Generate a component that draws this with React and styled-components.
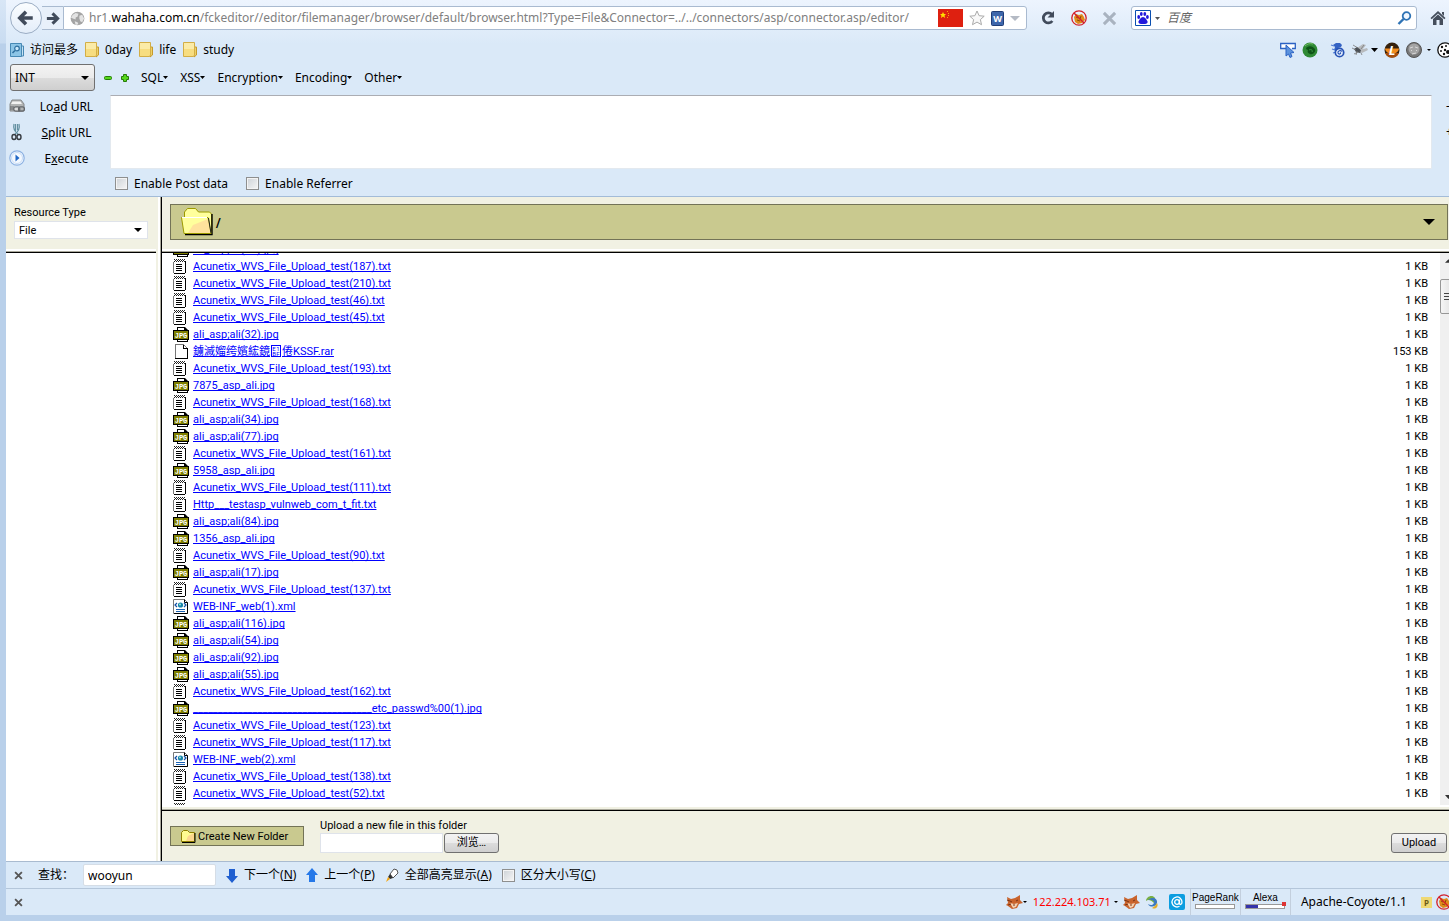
import { useEffect, useRef } from 'react';
import styled, { createGlobalStyle } from 'styled-components';

const GlobalStyle = createGlobalStyle`
  * {
    box-sizing: border-box;
  }
  body {
    margin: 0;
    background: #b9d0ea;
    color: #000;
    font: 12px/18px "Noto Sans", "Noto Sans CJK SC", sans-serif;
  }
  button, input, select, textarea {
    font: inherit;
    color: inherit;
  }
`;

const Window = styled.div`
  display: flex;
  flex-direction: column;
  height: 100vh;
  padding: 0 0 6px 6px;
  overflow: hidden;
  background: linear-gradient(#d8e6f6, #c9dcf1 43px, #b9d0ea 44px);
`;

const Chrome = styled.header`
  flex: none;
  background: linear-gradient(#edf4fe, #dae9f8 44px);
  border-bottom: 1px solid #a3bcd8;
`;

const PlainButton = styled.button`
  display: inline-flex;
  align-items: center;
  flex: none;
  gap: ${({ $gap }) => $gap || 0}px;
  padding: 0;
  border: 0;
  background: none;
  white-space: nowrap;
`;

const NavBar = styled.nav`
  display: flex;
  align-items: center;
  height: 36px;
  padding: 0 3px 0 4px;
`;

const BackButton = styled(PlainButton)`
  justify-content: center;
  width: 32px;
  height: 32px;
  border: 1px solid #9badc4;
  border-radius: 50%;
  background: linear-gradient(#fbfdff, #e3edf9);
`;

const ForwardButton = styled(PlainButton)`
  justify-content: center;
  width: 21px;
  height: 24px;
  border: solid #a9bad0;
  border-width: 1px 0;
  background: #e8f0fa;
`;

const UrlBox = styled.div`
  display: flex;
  align-items: center;
  flex: 1;
  min-width: 0;
  height: 24px;
  padding: 0 6px;
  border: 1px solid #a9bad0;
  border-radius: 0 3px 3px 0;
  background: #fff;
`;

const UrlText = styled.div`
  flex: 1;
  min-width: 0;
  margin: 0 5px 0 4px;
  overflow: hidden;
  white-space: nowrap;
  color: #808080;

  b {
    color: #000;
    font-weight: 400;
  }
`;

const UrlIcons = styled.div`
  display: flex;
  align-items: center;
  gap: 6px;
`;

const NavActions = styled.div`
  display: flex;
  gap: 15px;
  margin: 0 14px 0 13px;
`;

const SearchBox = styled.div`
  display: flex;
  align-items: center;
  flex: none;
  gap: 4px;
  width: 286px;
  height: 24px;
  margin-right: 13px;
  padding: 0 4px 0 3px;
  border: 1px solid #a9bad0;
  border-radius: 3px;
  background: #fff;
`;

const SearchInput = styled.input`
  flex: 1;
  min-width: 0;
  padding: 0 0 0 3px;
  border: 0;
  background: none;
  outline: none;

  &::placeholder {
    color: #666;
    font-style: italic;
    opacity: 1;
  }
`;

const BookmarkBar = styled.div`
  display: flex;
  align-items: center;
  justify-content: space-between;
  height: 27px;
  padding-left: 4px;
  overflow: hidden;
`;

const Group = styled.div`
  display: flex;
  align-items: center;
  gap: ${({ $gap }) => $gap}px;
`;

const AddonIcons = styled(Group)`
  flex: none;
  margin-right: -4px;
`;

const MenuBar = styled.div`
  display: flex;
  align-items: center;
  gap: 9px;
  height: 29px;
  padding-left: 4px;
`;

const Menus = styled.div`
  display: flex;
  gap: 12px;
  margin-left: 3px;
`;

const SelectWrap = styled.div`
  display: grid;
  align-items: center;
  width: ${({ $width }) => $width}px;

  select, svg {
    grid-area: 1 / 1;
  }
  svg {
    justify-self: end;
    margin-right: 6px;
    pointer-events: none;
  }
`;

const ModeSelect = styled.select`
  appearance: none;
  height: 27px;
  padding: 0 4px;
  border: 1px solid #707070;
  border-radius: 3px;
  background: linear-gradient(#f3f3f3, #ebebeb 50%, #dcdcdc 51%, #cfcfcf);
`;

const HackBar = styled.div`
  display: flex;
  height: 74px;
  margin-top: 3px;
  padding-left: 3px;
  overflow: hidden;
`;

const HackActions = styled.div`
  display: flex;
  flex-direction: column;
  flex: none;
  gap: 4px;
  width: 101px;
`;

const HackButton = styled(PlainButton)`
  height: 22px;

  span {
    width: 83px;
    padding-top: 1px;
    text-align: center;
  }
`;

const HackText = styled.textarea`
  flex: 1;
  resize: none;
  border: 1px solid #e3e9ef;
  border-top-color: #abadb3;
  background: #fff;
`;

const Resizers = styled.div`
  display: flex;
  flex-direction: column;
  flex: none;
  gap: 8px;
  width: 17px;
  padding: 2px 0 0 14px;
`;

const OptionRow = styled.div`
  display: flex;
  align-items: center;
  gap: 18px;
  height: 27px;
  padding: 2px 0 0 109px;
`;

const CheckLabel = styled.label`
  display: flex;
  align-items: center;
  gap: 6px;
  white-space: nowrap;

  input {
    appearance: none;
    width: 13px;
    height: 13px;
    margin: 0;
    border: 1px solid #8e8f8f;
    background: linear-gradient(135deg, #cdd2d7, #f6f6f6);
    box-shadow: inset 0 0 0 1px #f4f4f4;
  }
`;

const Frames = styled.main`
  display: flex;
  flex: 1;
  min-height: 0;
  background: #f1f1e3;
  font: 11px/17px Roboto, "Noto Sans CJK SC", sans-serif;
`;

const Sidebar = styled.aside`
  display: flex;
  flex-direction: column;
  flex: none;
  width: 150px;
`;

const FrameHead = styled.div`
  flex: none;
  height: 56px;
  padding: 7px 0 0 8px;
  border-bottom: 1px solid #000;
  box-shadow: inset 0 -1px #aaa99c, inset 0 -3px #fff;
`;

const Blank = styled.div`
  flex: 1;
  background: #fff;
`;

const TypeLabel = styled.label`
  display: block;
`;

const TypeSelect = styled.select`
  appearance: none;
  height: 18px;
  padding: 0 4px;
  border: 1px solid #dfe3ea;
  border-radius: 0;
  background: #fff;
`;

const Content = styled.section`
  display: flex;
  flex-direction: column;
  flex: 1;
  min-width: 0;
  margin-left: 5px;
  border-left: 1px solid #000;
  box-shadow: -1px 0 #aaa99c, -3px 0 #fff;
`;

const FolderBar = styled.button`
  display: flex;
  align-items: center;
  width: calc(100% - 1px);
  height: 36px;
  padding: 0 12px 0 9px;
  border: 1px solid #737357;
  background: #c9c98f;
  font-size: 13px;
  font-weight: 700;

  span {
    flex: 1;
    padding-left: 2px;
    text-align: left;
  }
`;

const ListArea = styled.div`
  display: flex;
  flex: 1;
  min-height: 0;
  overflow: hidden;
  background: #fff;
`;

const Scroller = styled.div`
  flex: 1;
  margin-bottom: 5px;
  overflow: hidden;
`;

const FileTable = styled.table`
  width: 100%;
  border-collapse: collapse;

  td {
    height: 17px;
    padding: 0;
    line-height: 17px;
    white-space: nowrap;
  }
  td:first-child {
    width: 31px;
    padding-left: 11px;
  }
  td:last-child {
    padding-right: 12px;
    text-align: right;
  }
  svg {
    display: block;
  }
`;

const FileLink = styled.a`
  color: #00f;
  text-decoration: underline;
  text-underline-offset: 1px;
  text-decoration-skip-ink: none;
`;

const HexGlyph = styled.span`
  display: inline-grid;
  grid-template-columns: 4px 4px;
  justify-content: center;
  width: 10px;
  height: 12px;
  margin: 2px 1px 0;
  vertical-align: top;
  border: 1px solid #00f;
  font-size: 6px;
  line-height: 5px;
  text-align: center;
`;

const ScrollBar = styled.div`
  display: flex;
  flex-direction: column;
  align-items: center;
  flex: none;
  width: 17px;
  margin: 0 -8px 5px 0;
  background: #f0f0f0;

  svg {
    margin: 6px 0;
  }
`;

const Thumb = styled.div`
  display: flex;
  flex-direction: column;
  align-items: center;
  justify-content: center;
  gap: 2px;
  width: 17px;
  height: 35px;
  margin: 10px 0 auto;
  border: 1px solid #979797;
  border-radius: 2px;
  background: linear-gradient(90deg, #f5f5f5, #dcdcdc);

  i {
    width: 9px;
    height: 1px;
    background: #444;
  }
`;

const UploadFrame = styled.footer`
  display: flex;
  align-items: flex-start;
  flex: none;
  height: 51px;
  padding: 8px 2px 0 8px;
  border-top: 1px solid #000;
  box-shadow: 0 -1px #aaa99c, 0 -3px #f1f1e3;
`;

const CreateButton = styled.button`
  display: flex;
  align-items: center;
  gap: 2px;
  width: 134px;
  height: 20px;
  margin: 7px 16px 0 0;
  padding: 0 9px;
  border: 1px solid #737357;
  background: #c9c98f;
  white-space: nowrap;
`;

const UploadForm = styled.form`
  flex: 1;

  label {
    display: block;
    height: 14px;
    line-height: 14px;
  }
`;

const FileBox = styled.input`
  width: 123px;
  height: 20px;
  padding: 0 4px;
  border: 1px solid #dfe3ea;
  background: #fff;
`;

const GreyButton = styled.button`
  width: 55px;
  height: 20px;
  padding: 0;
  border: 1px solid #707070;
  border-radius: 3px;
  background: linear-gradient(#f3f3f3, #ebebeb 50%, #dcdcdc 51%, #cfcfcf);
  line-height: 18px;
`;

const UploadButton = styled(GreyButton)`
  width: 56px;
  margin-top: 14px;
`;

const FindBar = styled.div`
  display: flex;
  align-items: center;
  flex: none;
  gap: 10px;
  height: 27px;
  padding-left: 8px;
  border-top: 1px solid #a9bbd0;
  background: #dae9f8;
`;

const FindLabel = styled.label`
  display: flex;
  align-items: center;
  gap: 9px;
  margin-left: 5px;
  white-space: nowrap;
`;

const FindInput = styled.input`
  width: 133px;
  height: 22px;
  padding: 0 4px;
  border: 1px solid #d5dde6;
  border-radius: 2px;
  background: #fff;
`;

const StatusBar = styled.div`
  display: flex;
  align-items: center;
  justify-content: space-between;
  flex: none;
  height: 27px;
  padding-left: 8px;
  overflow: hidden;
  border-top: 1px solid #b4c6da;
  background: #dae9f8;
`;

const StatusItems = styled.div`
  display: flex;
  align-items: center;
  height: 26px;
  margin-right: -3px;
`;

const Address = styled.span`
  margin: 0 3px 0 6px;
  color: #f00;
  font-size: 11px;
`;

const Meter = styled.div`
  display: flex;
  flex-direction: column;
  align-items: center;
  gap: 1px;
  width: 50px;
  height: 26px;
  padding-top: 3px;
  border-left: 1px solid #c3cfdd;
  font: 10px/11px "Liberation Sans", sans-serif;
`;

const Track = styled.div`
  position: relative;
  width: 40px;
  height: 5px;
  border: 1px solid #999;
  background: linear-gradient(90deg, #33a ${({ $value }) => $value}%, #fff ${({ $value }) => $value}%);

  i {
    position: absolute;
    top: -3px;
    right: -2px;
    width: 4px;
    height: 4px;
    background: #d33;
  }
`;

const Server = styled.span`
  padding: 4px 14px 4px 10px;
  border-left: 1px solid #c3cfdd;
`;

function Caret({ size = 5, color = '#000' }) {
  return (
    <svg width={size} height={Math.ceil(size / 2)} viewBox="0 0 8 4" preserveAspectRatio="none">
      <path d="M0 0h8L4 4z" fill={color} />
    </svg>
  );
}

function ArrowIcon({ size, flip }) {
  return (
    <svg width={size} height={size} viewBox="0 0 16 16">
      <path
        d={flip ? 'M2 8h11M8 2.5L13.5 8 8 13.5' : 'M14 8H3M8 2.5L2.500 8 8 13.5'}
        fill="none"
        stroke="#414b5b"
        strokeWidth="3.2"
      />
    </svg>
  );
}

function GlobeIcon() {
  return (
    <svg width="15" height="15" viewBox="0 0 16 16">
      <circle cx="8" cy="8" r="7.300" fill="#a4a4a4" />
      <path d="M3 4l3-2 3 1-1 3-2 1v2L3 8 1 7zM10 5l3-1 2 4-2 4-2-1-1-3zM5 11l3 1 1 2-3 1z" fill="#e3e3e3" />
    </svg>
  );
}

function FlagIcon() {
  return (
    <svg width="25" height="18" viewBox="0 0 25 18">
      <path d="M0 0h25v18H0z" fill="#de2010" />
      <path d="M5 3l1 2h2L6.500 6.500 7 9 5 7.500 3 9l.5-2.500L2 5h2z" fill="#ffde00" />
      <path d="M9 2h1v1H9zM10 4h1v1h-1zM10 6h1v1h-1zM9 8h1v1H9z" fill="#f3a50c" />
    </svg>
  );
}

function StarIcon() {
  return (
    <svg width="16" height="16" viewBox="0 0 16 16">
      <path
        d="M8 1l2.100 4.700 5.100.5-3.800 3.400 1.100 5.100L8 12.100l-4.500 2.600 1.100-5.100L.8 6.200l5.100-.5z"
        fill="#f8f8f8"
        stroke="#aaa"
      />
    </svg>
  );
}

function WordIcon() {
  return (
    <svg width="13" height="15" viewBox="0 0 13 15">
      <rect x=".5" y=".5" width="12" height="14" rx="1" fill="#3d66ab" stroke="#1f3d77" />
      <text x="6.500" y="11" textAnchor="middle" fill="#fff" fontSize="9" fontWeight="700">W</text>
    </svg>
  );
}

function ReloadIcon() {
  return (
    <svg width="16" height="16" viewBox="0 0 16 16">
      <path d="M12.300 11A5 5 0 1 1 12 4.500" fill="none" stroke="#414b5b" strokeWidth="2.800" />
      <path d="M14 1v6.500H7.500z" fill="#414b5b" />
    </svg>
  );
}

function BlockIcon() {
  return (
    <svg width="16" height="16" viewBox="0 0 16 16">
      <path d="M3 7l2-3 3 1 3-1 2 3 1 3-3 3-4 1-3-2z" fill="#e08a1c" />
      <path d="M5 7l2 1M10 6l-1 3M6 10l3 1" stroke="#8a4b08" />
      <circle cx="8" cy="8" r="7.200" fill="none" stroke="#d3202a" strokeWidth="1.300" />
      <path d="M3 3l10 10" stroke="#d3202a" strokeWidth="1.400" />
    </svg>
  );
}

function CloseIcon({ size, color }) {
  return (
    <svg width={size} height={size} viewBox="0 0 12 12">
      <path d="M1.500 1.500l9 9M10.500 1.500l-9 9" stroke={color} strokeWidth="2.400" />
    </svg>
  );
}

function BaiduIcon() {
  return (
    <svg width="16" height="16" viewBox="0 0 16 16">
      <path d="M.5.5h15v15H.5z" fill="#fff" stroke="#0a4fb0" />
      <g fill="#2319dc">
        <ellipse cx="3.700" cy="7" rx="1.400" ry="1.900" />
        <ellipse cx="6.300" cy="4" rx="1.400" ry="2" />
        <ellipse cx="9.800" cy="4" rx="1.400" ry="2" />
        <ellipse cx="12.400" cy="7" rx="1.400" ry="1.900" />
        <path d="M8 7c2 0 4 3 4.500 4.500S11.500 14 10 14H6c-1.500 0-3-1-2.500-2.500S6 7 8 7z" />
      </g>
    </svg>
  );
}

function SearchIcon() {
  return (
    <svg width="15" height="15" viewBox="0 0 15 15">
      <circle cx="9.500" cy="5" r="3.800" fill="#f0f7ff" stroke="#2e73b5" strokeWidth="1.800" />
      <path d="M6.500 8L1.500 13" stroke="#2e73b5" strokeWidth="2.400" />
    </svg>
  );
}

function HomeIcon() {
  return (
    <svg width="16" height="16" viewBox="0 0 16 16">
      <path d="M8 1l7.500 7-1.200 1.200L8 3.500 1.700 9.200.5 8zM12 2h2v4l-2-2z" fill="#454e5c" />
      <path d="M3 9l5-4.500L13 9v6H9.500v-5h-3v5H3z" fill="#454e5c" />
    </svg>
  );
}

function MostVisitedIcon() {
  return (
    <svg width="14" height="16" viewBox="0 0 14 16">
      <path d="M10 4h3.500v10H10z" fill="#c5e2f4" stroke="#4789b5" />
      <path d="M.5 1.500h11v13H.5z" fill="#8dc5e6" stroke="#4789b5" />
      <circle cx="7" cy="6.500" r="2.300" fill="#c9e8fa" stroke="#2f6f9f" strokeWidth="1.200" />
      <path d="M5 8.500L2.500 11" stroke="#2f6f9f" strokeWidth="1.600" />
    </svg>
  );
}

function BookmarkFolder() {
  return (
    <svg width="14" height="16" viewBox="0 0 14 16">
      <path d="M10 5h3.500v8L11 15z" fill="#edd067" stroke="#c69b2d" />
      <path d="M.5.5h11v13l-1.500 1H.5z" fill="#f7dd80" stroke="#d3ae46" />
      <path d="M1 1h10v6H1z" fill="#fbeba7" />
    </svg>
  );
}

function PointerIcon() {
  return (
    <svg width="16" height="16" viewBox="0 0 16 16">
      <path d="M6 6.500H.7v-5h14.600v5H12" fill="#fff" stroke="#2b62c4" strokeWidth="1.300" />
      <path d="M6 3v11l2.500-2 1.500 3.500 2-1L10.500 11l3.500-.5z" fill="#5c92dd" stroke="#2b62c4" />
    </svg>
  );
}

function GreenBallIcon() {
  return (
    <svg width="16" height="16" viewBox="0 0 16 16">
      <circle cx="8" cy="8" r="7.500" fill="#2f8a35" />
      <path d="M4 6c3-3 7-2 9 1 1 3-2 6-5 5-2-1-3-2-2-4-1 0-2-1-2-2z" fill="#0e5417" />
      <path d="M7 8c2-1 4 0 3 2" fill="none" stroke="#3f9a45" />
      <path d="M3 4c2-2 5-3 8-2" stroke="#77bd66" fill="none" />
    </svg>
  );
}

function SeahorseIcon() {
  return (
    <svg width="16" height="16" viewBox="0 0 16 16">
      <path d="M3 3l3-2h4l2 2-1 2-3 1-2 3-2-1 1-3z" fill="#3463c4" />
      <path d="M1 3l3 1M2 7l3 1M3 11l3-1" stroke="#4f7cd6" strokeWidth="1.300" />
      <circle cx="9.500" cy="10.500" r="4.200" fill="#e4eefc" stroke="#2552b5" strokeWidth="1.700" />
      <path d="M12 9.500c-1.500-2-4.500-.5-4 1.500.8 1.800 3 1 2.500-.7" fill="none" stroke="#2552b5" strokeWidth="1.200" />
    </svg>
  );
}

function FlyIcon() {
  return (
    <svg width="16" height="16" viewBox="0 0 16 16">
      <path d="M5 6l6-4 3 1-4 5zM8 8l7-2 1 2-6 3z" fill="#b7babd" />
      <path d="M2 7l3-2 4 3-1 3-4-1z" fill="#4a4f55" />
      <path d="M0 6l4 2M1 3l5 3M5 9l-1 4M8 9l2 4M6 10L2 12M9 7l3-4" stroke="#777" fill="none" strokeWidth=".8" />
    </svg>
  );
}

function LiveIcon() {
  return (
    <svg width="16" height="16" viewBox="0 0 16 16">
      <circle cx="8" cy="8" r="7.500" fill="#35210d" />
      <path d="M.8 6.500a7.500 7.500 0 0 0 14.400 0z" fill="#f08a1d" />
      <path d="M1 11h14a7.500 7.500 0 0 1-14 0z" fill="#a44d0c" />
      <text x="8" y="13" textAnchor="middle" fill="#fff" fontSize="13" fontWeight="700" fontStyle="italic">L</text>
    </svg>
  );
}

function GreyFaceIcon() {
  return (
    <svg width="16" height="16" viewBox="0 0 16 16">
      <circle cx="8" cy="8" r="7.500" fill="#777" stroke="#555" />
      <circle cx="8" cy="7" r="5.500" fill="#a4a4a4" />
      <path d="M4 6l3-1M9 5l3 1M5 8l1 1M10 8l1 1M6 12l4-1" stroke="#d8d8d8" />
    </svg>
  );
}

function CookieIcon() {
  return (
    <svg width="16" height="16" viewBox="0 0 16 16">
      <circle cx="8" cy="8" r="7.200" fill="#fff" stroke="#111" strokeWidth="1.300" />
      <g fill="#111">
        <circle cx="5" cy="5" r="1.200" />
        <circle cx="9" cy="4" r="1" />
        <circle cx="4" cy="9" r="1" />
        <circle cx="8" cy="8" r="1.200" />
        <circle cx="7" cy="12" r="1.200" />
        <circle cx="11" cy="10" r="2" />
      </g>
    </svg>
  );
}

function MinusIcon() {
  return (
    <svg width="8" height="8" viewBox="0 0 8 8">
      <rect x=".5" y="2.500" width="7" height="3" rx="1" fill="#55d81a" stroke="#267a0a" />
    </svg>
  );
}

function PlusIcon() {
  return (
    <svg width="8" height="8" viewBox="0 0 8 8">
      <path d="M2.500.5h3v2h2v3h-2v2h-3v-2h-2v-3h2z" fill="#55d81a" stroke="#267a0a" />
    </svg>
  );
}

function LoadIcon() {
  return (
    <svg width="16" height="16" viewBox="0 0 16 16">
      <path d="M3 2h9l3 4v7H1V6z" fill="#b2b4b4" stroke="#85888a" />
      <path d="M3.500 3.500h8L13 6H2z" fill="#f2f2f2" />
      <path d="M1 9h4M1 11h4" stroke="#606366" />
      <rect x="4.800" y="8.800" width="6" height="4.400" rx="2" fill="#ddd" stroke="#63666a" strokeWidth="1.200" />
      <rect x="9.500" y="8.800" width="6" height="4.400" rx="2" fill="none" stroke="#63666a" strokeWidth="1.200" />
    </svg>
  );
}

function SplitIcon() {
  return (
    <svg width="16" height="18" viewBox="0 0 16 18">
      <path d="M5 1C4 5 5 8 9 11M10 1c1 4 0 7-4 10M6.500 1v7M8.500 1v6" fill="none" stroke="#6491a2" strokeWidth="1.200" />
      <ellipse cx="5" cy="14" rx="2" ry="2.500" fill="none" stroke="#353a40" strokeWidth="1.400" />
      <ellipse cx="10" cy="14" rx="2" ry="2.500" fill="none" stroke="#353a40" strokeWidth="1.400" />
    </svg>
  );
}

function ExecuteIcon() {
  return (
    <svg width="16" height="16" viewBox="0 0 16 16">
      <circle cx="8" cy="8" r="7.200" fill="#f4f9ff" stroke="#8cb1e2" strokeWidth="1.200" />
      <circle cx="8" cy="8" r="5.500" fill="none" stroke="#c8dcf5" />
      <path d="M6.500 4.500L10.500 8l-4 3.500z" fill="#2067c5" />
    </svg>
  );
}

function BigFolderIcon() {
  return (
    <svg width="34" height="30" viewBox="0 0 34 30">
      <path d="M4.500 26V5l3-3.500h8l3 3.500h11l2 2v19z" fill="#ffff9c" stroke="#9c9a00" />
      <path d="M32 7v20.500H5" fill="none" stroke="#000" strokeWidth="1.400" />
      <path d="M1.500 10.500H28l3 16H4z" fill="#ffff9c" stroke="#9c9a00" />
      <path d="M13 18l15-6 2.500 14H8z" fill="#ffce9c" opacity=".6" />
      <path d="M28.500 11l2.500 15" stroke="#222" />
      <path d="M2 10.500h25" stroke="#fff" />
    </svg>
  );
}

function SmallFolderIcon() {
  return (
    <svg width="16" height="14" viewBox="0 0 16 14">
      <path d="M1.500 12.500v-9l2-2h4l2 2h5v9z" fill="#fffb90" stroke="#908000" />
      <path d="M8 7l6-3v8H6z" fill="#fcd68d" />
      <path d="M15 4v9.500H2" fill="none" stroke="#000" />
    </svg>
  );
}

function TxtIcon() {
  return (
    <svg width="16" height="17" viewBox="0 0 16 17" shapeRendering="crispEdges">
      <path d="M1 2h11v13H1z" fill="#fff" />
      <path d="M0 4h1v11H0z" fill="#777" />
      <path d="M1 1h1v1H1zM3 1h1v1H3zM5 1h1v1H5zM7 1h1v1H7zM9 1h1v1H9zM11 1h1v1h-1zM2 2h1v1H2zM4 2h1v1H4zM6 2h1v1H6zM8 2h1v1H8zM10 2h1v1h-1zM1 3h1v1H1zM3 3h1v1H3zM5 3h1v1H5zM7 3h1v1H7zM9 3h1v1H9zM11 3h1v1h-1z" fill="#222" />
      <path d="M12 3h1v12h-1v1H1v-1h11zM3 6h6v1H3zM3 8h6v1H3zM3 10h6v1H3zM3 12h6v1H3z" fill="#000" />
    </svg>
  );
}

function JpgIcon() {
  return (
    <svg width="16" height="17" viewBox="0 0 16 17">
      <path d="M4 1h8l3 3v12H4z" fill="#000" />
      <path d="M5 2h6v3h3v10H5z" fill="#fff" />
      <path d="M0 4h16v10H0z" fill="#000" />
      <path d="M1 5h14v8H1z" fill="#808000" />
      <text x="8" y="11.500" textAnchor="middle" fill="#fff" fontFamily="Liberation Mono" fontSize="7" fontWeight="700">JPG</text>
    </svg>
  );
}

function XmlIcon() {
  return (
    <svg width="16" height="17" viewBox="0 0 16 17">
      <path d="M.5 1.500h11l3 3v11H.5z" fill="#fff" stroke="#777" />
      <path d="M11.500 1.500v3h3v11H1" fill="none" stroke="#000" />
      <path d="M4 5L2 7l2 2M11 5l2 2-2 2" fill="none" stroke="#124fa5" strokeWidth="1.200" />
      <circle cx="7.500" cy="7" r="2.600" fill="#1684a8" />
      <circle cx="7" cy="6.500" r="1" fill="#9ce4dc" />
      <path d="M3 11.500h9M3 13.500h9" stroke="#1b62b4" />
    </svg>
  );
}

function BlankFileIcon() {
  return (
    <svg width="16" height="17" viewBox="0 0 16 17" shapeRendering="crispEdges">
      <path d="M2.500 1.500h8l4 4v10h-12z" fill="#fff" stroke="#777" />
      <path d="M10.500 1.500v4h4v10H2" fill="none" stroke="#000" />
    </svg>
  );
}

function FindArrow({ up }) {
  return (
    <svg width="12" height="15" viewBox="0 0 12 15">
      <path d={up ? 'M6 0l6 7H9v7H3V7H0z' : 'M6 15l6-7H9V1H3v7H0z'} fill={up ? '#2578e8' : '#1f5fd0'} />
    </svg>
  );
}

function MarkerIcon() {
  return (
    <svg width="14" height="16" viewBox="0 0 14 16">
      <path d="M5 7l4-5 3 1 1 3-5 5z" fill="#fff" stroke="#555" />
      <path d="M5 7l3 4-3 1-2-2z" fill="#333" />
      <path d="M3 10l2 2-4 3z" fill="#f7a60b" />
    </svg>
  );
}

function FoxIcon() {
  return (
    <svg width="17" height="16" viewBox="0 0 17 16">
      <path d="M1 3l4 2 4-1 5-3v5l3 3-4 1-2 4-5 1-4-3-2-1 2-2z" fill="#c9642d" />
      <path d="M4 9l4 1 4-1-2 4-3 1z" fill="#f3d3b5" />
      <path d="M4 7l2 1M10 7l2-1M7 11h2M1 6l3 1M2 11l3-1" stroke="#7a3517" />
    </svg>
  );
}

function SwirlIcon() {
  return (
    <svg width="14" height="15" viewBox="0 0 14 15">
      <path d="M10 3C7-1 1 2 1 6c2-2 5-1 8 2 1-2 1-3 1-5z" fill="#78af45" />
      <path d="M3 5c5-4 10-1 9 3S5 13 3 9c3 2 5 1 6-1S6 4 3 5z" fill="#3c79c0" />
      <path d="M7 13c4 2 7-2 5-5-1 2-3 4-5 5z" fill="#e3ac28" />
    </svg>
  );
}

function AtIcon() {
  return (
    <svg width="16" height="16" viewBox="0 0 16 16">
      <rect width="16" height="16" rx="2" fill="#0b9de0" />
      <circle cx="8" cy="8" r="2.300" fill="none" stroke="#fff" strokeWidth="1.300" />
      <path d="M10.500 5.500v4c0 1.500 2.500 1.500 2.500-1.500a5 5 0 1 0-2.500 4.300" fill="none" stroke="#fff" strokeWidth="1.300" />
    </svg>
  );
}

function NoteIcon() {
  return (
    <svg width="11" height="11" viewBox="0 0 11 11">
      <path d="M0 0h11v11H0z" fill="#efd975" />
      <text x="5.500" y="8.500" textAnchor="middle" fill="#6b5b16" fontSize="8" fontWeight="700">P</text>
    </svg>
  );
}

const ICONS = { txt: TxtIcon, jpg: JpgIcon, xml: XmlIcon, rar: BlankFileIcon };

const acunetix = (n) => `Acunetix_WVS_File_Upload_test(${n}).txt`;
const ali = (n) => `ali_asp;ali(${n}).jpg`;

const FILES = [
  ali(61),
  acunetix(187),
  acunetix(210),
  acunetix(46),
  acunetix(45),
  ali(32),
  'KSSF.rar',
  acunetix(193),
  '7875_asp_ali.jpg',
  acunetix(168),
  ali(34),
  ali(77),
  acunetix(161),
  '5958_asp_ali.jpg',
  acunetix(111),
  'Http___testasp_vulnweb_com_t_fit.txt',
  ali(84),
  '1356_asp_ali.jpg',
  acunetix(90),
  ali(17),
  acunetix(137),
  'WEB-INF_web(1).xml',
  ali(116),
  ali(54),
  ali(92),
  ali(55),
  acunetix(162),
  `${'_'.repeat(36)}etc_passwd%00(1).jpg`,
  acunetix(123),
  acunetix(117),
  'WEB-INF_web(2).xml',
  acunetix(138),
  acunetix(52),
  acunetix(71),
];

const MENUS = ['SQL', 'XSS', 'Encryption', 'Encoding', 'Other'];
const BOOKMARKS = ['0day', 'life', 'study'];

function FileRow({ name }) {
  const ext = name.split('.').pop();
  const Icon = ICONS[ext];
  return (
    <tr>
      <td><Icon /></td>
      <td>
        <FileLink href="#">
          {ext === 'rar' && (
            <>
              鐪滅媹绔嬪綋鏡
              <HexGlyph><span>E</span><span>1</span><span>B</span><span>F</span></HexGlyph>
              倦
            </>
          )}
          {name}
        </FileLink>
      </td>
      <td>{ext === 'rar' ? '153 KB' : '1 KB'}</td>
    </tr>
  );
}

function FileList() {
  const scroller = useRef(null);

  useEffect(() => {
    scroller.current.scrollTop = 12;
  }, []);

  return (
    <ListArea>
      <Scroller ref={scroller}>
        <FileTable>
          <tbody>
            {FILES.map((name) => <FileRow key={name} name={name} />)}
          </tbody>
        </FileTable>
      </Scroller>
      <ScrollBar>
        <svg width="7" height="4" viewBox="0 0 8 4"><path d="M0 4h8L4 0z" fill="#333" /></svg>
        <Thumb><i /><i /><i /></Thumb>
        <Caret size={7} color="#333" />
      </ScrollBar>
    </ListArea>
  );
}

export default function App() {
  return (
    <Window>
      <GlobalStyle />
      <Chrome>
        <NavBar>
          <BackButton aria-label="Back"><ArrowIcon size={18} /></BackButton>
          <ForwardButton aria-label="Forward"><ArrowIcon size={15} flip /></ForwardButton>
          <UrlBox>
            <GlobeIcon />
            <UrlText>
              hr1.<b>wahaha.com.cn</b>
              /fckeditor//editor/filemanager/browser/default/browser.html?Type=File&amp;Connector=../../connectors/asp/connector.asp/editor/
            </UrlText>
            <UrlIcons>
              <FlagIcon />
              <StarIcon />
              <WordIcon />
              <Caret size={10} color="#b4bac4" />
            </UrlIcons>
          </UrlBox>
          <NavActions>
            <PlainButton aria-label="Reload"><ReloadIcon /></PlainButton>
            <PlainButton aria-label="Block"><BlockIcon /></PlainButton>
            <PlainButton aria-label="Stop"><CloseIcon size={15} color="#a9b3c0" /></PlainButton>
          </NavActions>
          <SearchBox>
            <BaiduIcon />
            <Caret size={5} color="#555" />
            <SearchInput aria-label="Search" placeholder="百度" />
            <SearchIcon />
          </SearchBox>
          <PlainButton aria-label="Home"><HomeIcon /></PlainButton>
        </NavBar>

        <BookmarkBar>
          <Group $gap={7}>
            <PlainButton $gap={6}><MostVisitedIcon />访问最多</PlainButton>
            {BOOKMARKS.map((name) => (
              <PlainButton key={name} $gap={6}><BookmarkFolder />{name}</PlainButton>
            ))}
          </Group>
          <AddonIcons $gap={6}>
            <PointerIcon />
            <GreenBallIcon />
            <span />
            <SeahorseIcon />
            <Group $gap={3}><FlyIcon /><Caret size={7} /></Group>
            <LiveIcon />
            <Group $gap={5}><GreyFaceIcon /><Caret size={4} /></Group>
            <CookieIcon />
          </AddonIcons>
        </BookmarkBar>

        <MenuBar>
          <SelectWrap $width={85}>
            <ModeSelect aria-label="Mode" defaultValue="INT">
              <option>INT</option>
            </ModeSelect>
            <Caret size={8} />
          </SelectWrap>
          <Group $gap={9}>
            <PlainButton aria-label="Decrease"><MinusIcon /></PlainButton>
            <PlainButton aria-label="Increase"><PlusIcon /></PlainButton>
          </Group>
          <Menus>
            {MENUS.map((menu) => (
              <PlainButton key={menu}>{menu}<Caret size={5} /></PlainButton>
            ))}
          </Menus>
        </MenuBar>

        <HackBar>
          <HackActions>
            <HackButton><LoadIcon /><span>Lo<u>a</u>d URL</span></HackButton>
            <HackButton><SplitIcon /><span><u>S</u>plit URL</span></HackButton>
            <HackButton><ExecuteIcon /><span>E<u>x</u>ecute</span></HackButton>
          </HackActions>
          <HackText aria-label="URL" />
          <Resizers>
            <PlainButton>-</PlainButton>
            <PlainButton>+</PlainButton>
          </Resizers>
        </HackBar>

        <OptionRow>
          <CheckLabel><input type="checkbox" />Enable Post data</CheckLabel>
          <CheckLabel><input type="checkbox" />Enable Referrer</CheckLabel>
        </OptionRow>
      </Chrome>

      <Frames>
        <Sidebar>
          <FrameHead>
            <TypeLabel htmlFor="type">Resource Type</TypeLabel>
            <SelectWrap $width={134}>
              <TypeSelect id="type" defaultValue="File">
                <option>File</option>
              </TypeSelect>
              <Caret size={8} />
            </SelectWrap>
          </FrameHead>
          <Blank />
        </Sidebar>

        <Content>
          <FrameHead>
            <FolderBar>
              <BigFolderIcon />
              <span>/</span>
              <Caret size={12} />
            </FolderBar>
          </FrameHead>
          <FileList />
          <UploadFrame>
            <CreateButton><SmallFolderIcon />Create New Folder</CreateButton>
            <UploadForm>
              <label htmlFor="upload">Upload a new file in this folder</label>
              <Group $gap={1}>
                <FileBox id="upload" />
                <GreyButton type="button">浏览…</GreyButton>
              </Group>
            </UploadForm>
            <UploadButton>Upload</UploadButton>
          </UploadFrame>
        </Content>
      </Frames>

      <FindBar>
        <PlainButton aria-label="Close find bar"><CloseIcon size={9} color="#555" /></PlainButton>
        <FindLabel>
          查找：
          <FindInput defaultValue="wooyun" />
        </FindLabel>
        <PlainButton $gap={6}><FindArrow /><span>下一个(<u>N</u>)</span></PlainButton>
        <PlainButton $gap={6}><FindArrow up /><span>上一个(<u>P</u>)</span></PlainButton>
        <PlainButton $gap={6}><MarkerIcon /><span>全部高亮显示(<u>A</u>)</span></PlainButton>
        <CheckLabel><input type="checkbox" /><span>区分大小写(<u>C</u>)</span></CheckLabel>
      </FindBar>

      <StatusBar>
        <PlainButton aria-label="Close status bar"><CloseIcon size={9} color="#555" /></PlainButton>
        <StatusItems>
          <FoxIcon />
          <Caret size={4} />
          <Address>122.224.103.71</Address>
          <Group $gap={5}>
            <Caret size={4} />
            <FoxIcon />
            <SwirlIcon />
            <span />
            <AtIcon />
            <Meter>PageRank<Track $value={0} /></Meter>
          </Group>
          <Meter>Alexa<Track $value={32}><i /></Track></Meter>
          <Server>Apache-Coyote/1.1</Server>
          <Group $gap={4}>
            <NoteIcon />
            <BlockIcon />
          </Group>
        </StatusItems>
      </StatusBar>
    </Window>
  );
}
